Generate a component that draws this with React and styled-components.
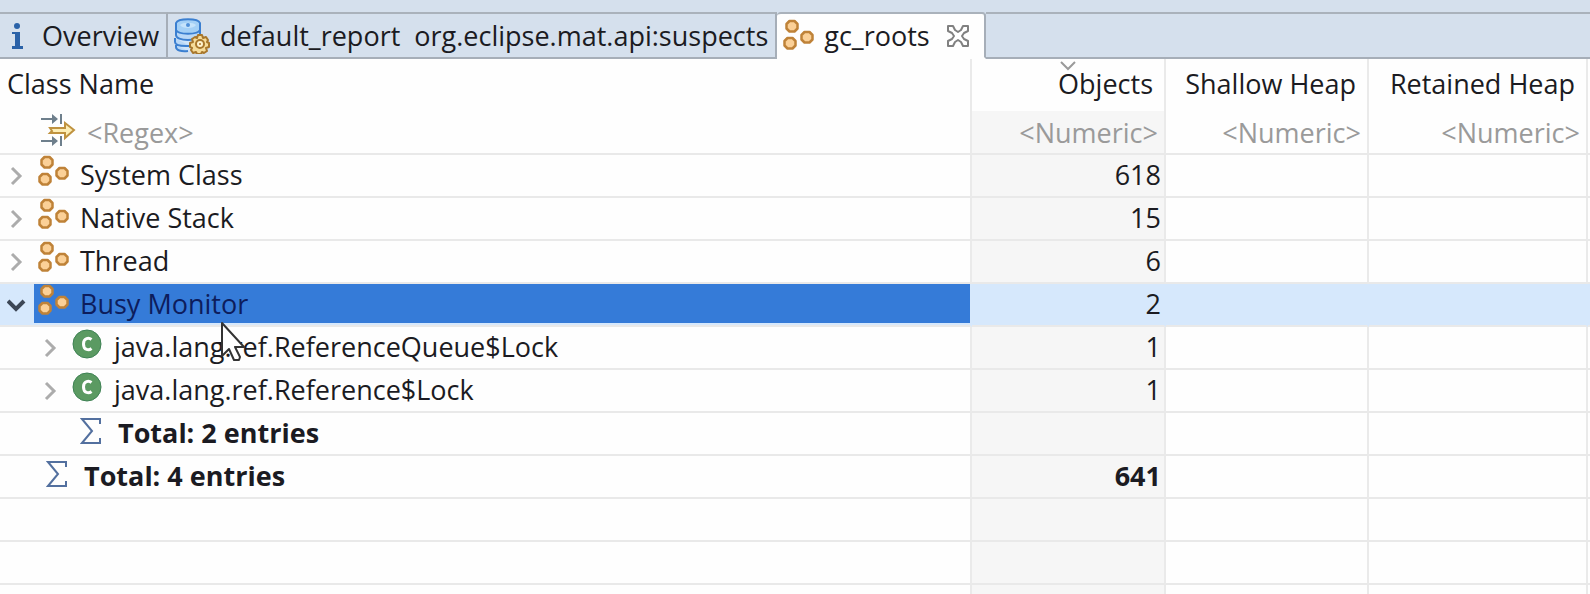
import React, { useState } from 'react'
import styled, { createGlobalStyle } from 'styled-components'

const GlobalStyle = createGlobalStyle`
  * {
    box-sizing: border-box;
  }
  body {
    margin: 0;
    overflow: hidden;
    background: #fefefe;
    color: #1b1b22;
    font-family: "Open Sans", "Noto Sans", "Noto Sans CJK SC", sans-serif;
    font-size: 27px;
  }
  button, input {
    font: inherit;
    color: inherit;
    background: none;
    border: 0;
    margin: 0;
    padding: 0;
  }
  svg {
    display: block;
    flex: none;
  }
`;

const View = styled.main`
  position: relative;
  height: 100vh;
  overflow: hidden;
`;

const TabStrip = styled.div`
  display: flex;
  height: 59px;
  padding-top: 12px;
  background: #d5e0ed;
`;

const Tab = styled.div`
  display: flex;
  align-items: center;
  padding: 0 ${props => (props.$active ? '14px' : '7px')} 0 6px;
  border-top: 2px solid #aab2bb;
  border-bottom: 2px solid ${props => (props.$active ? '#fefefe' : '#a6aeb8')};
  border-right: 2px solid #a6aeb8;
  border-radius: ${props => (props.$active ? '4px 4px 0 0' : '0')};
  background: ${props => (props.$active ? '#fefefe' : 'transparent')};
`;

const TabButton = styled.button`
  display: flex;
  align-items: center;
  gap: 10px;
  line-height: 36px;
  white-space: pre;
`;

const TabFill = styled.div`
  flex: 1;
  border-top: 2px solid #aab2bb;
  border-bottom: 2px solid #a6aeb8;
`;

const CloseButton = styled.button`
  margin-left: 16px;
`;

const Table = styled.table`
  width: 100%;
  table-layout: fixed;
  border-collapse: separate;
  border-spacing: 0;
`;

const Col = styled.col`
  width: ${props => props.$width};
`;

const HeadCell = styled.th`
  position: relative;
  height: 52px;
  padding: 0 ${props => (props.$numeric ? '11px' : '7px')} 2px;
  border-right: 2px solid #eaeaea;
  font-weight: normal;
  line-height: 36px;
  white-space: nowrap;
  text-align: ${props => (props.$numeric ? 'right' : 'left')};
`;

const SortMark = styled.svg`
  position: absolute;
  top: 2px;
  left: 50%;
  transform: translateX(-50%);
`;

const FilterCell = styled.td`
  height: 44px;
  padding: 0 6px 0 ${props => (props.$numeric ? '6px' : '40px')};
  border-right: 2px solid #eaeaea;
  border-bottom: 2px solid #e9e9e9;
  background: ${props => (props.$sorted ? '#f6f6f6' : 'transparent')};
`;

const FilterBox = styled.label`
  display: flex;
  align-items: center;
  gap: 10px;
`;

const FilterInput = styled.input`
  flex: 1;
  min-width: 0;
  height: 36px;
  text-align: ${props => (props.$numeric ? 'right' : 'left')};
  outline: none;
  &::placeholder {
    color: #9a9a9a;
    opacity: 1;
  }
`;

const Row = styled.tr`
  background: ${props => (props.$selected ? '#d6e8fc' : 'transparent')};
`;

const Cell = styled.td`
  height: 43px;
  padding: 0 3px 2px;
  border-right: 2px solid ${props => (props.$selected ? '#d6e8fc' : '#eaeaea')};
  border-bottom: 2px solid #e9e9e9;
  background: ${props => (props.$sorted && !props.$selected ? '#f6f6f6' : 'transparent')};
  font-weight: ${props => (props.$bold ? 'bold' : 'normal')};
  line-height: 39px;
  text-align: right;
`;

const NameCell = styled(Cell)`
  padding: 0 0 2px ${props => props.$level * 34}px;
  text-align: left;
`;

const EndCell = styled.td`
  padding: 0;
  border-bottom: 2px solid #e9e9e9;
`;

const NameLine = styled.div`
  display: flex;
  height: 39px;
`;

const Toggle = styled.button`
  display: flex;
  align-items: center;
  justify-content: center;
  width: 34px;
  padding-top: 3px;
`;

const Spacer = styled.span`
  width: 34px;
`;

const Label = styled.span`
  display: flex;
  flex: 1;
  gap: ${props => (props.$total ? '16px' : '11px')};
  padding-left: ${props => (props.$total ? '12px' : '4px')};
  background: ${props => (props.$selected ? '#357bd8' : 'transparent')};
  color: ${props => (props.$selected ? '#0d1d5c' : 'inherit')};
  white-space: nowrap;
`;

const Pointer = styled.svg`
  position: absolute;
  left: 220px;
  top: 320px;
  pointer-events: none;
`;

const InfoIcon = () => (
  <svg width="26" height="28" viewBox="-2 0 26 28">
    <circle cx="9" cy="4" r="3" fill="#2a62a8" />
    <path d="M4 10h8v14h3v3H4v-3h3V12H4z" fill="#2a62a8" />
  </svg>
)

const ReportIcon = () => (
  <svg width="36" height="36" viewBox="0 0 36 36">
    <path d="M2 6v23c0 3 4 4 10 4h10V6z" fill="#cfe4fa" />
    <path
      d="M1 20v4c0 3 5 4 11 4h4M2 27v2c0 3 5 5 12 4M2 12v5c0 3 5 5 12 5 7 0 12-2 12-5v-5"
      fill="#b9d8f7"
      stroke="#3b7fd0"
      strokeWidth="2"
    />
    <path d="M2 5c2-5 22-5 24 0v7c-2 5-22 5-24 0z" fill="#a4d0f6" stroke="#3b7fd0" strokeWidth="2" />
    <path d="M6 7c3-3 13-3 16 0-2 4-14 4-16 0z" fill="#c5e3fb" />
    <circle cx="14" cy="7" r="2" fill="#4f8fd8" />
    <path
      d="M24 17h4l1 3 3-1 2 3-1 2 2 1v4l-3 1 1 3-3 2-2-1-1 2h-4l-1-2-3 1-2-3 1-2-2-1v-4l3-1-1-3 3-2 2 1z"
      fill="#f6dc9a"
      stroke="#a8772c"
      strokeWidth="2"
      strokeLinejoin="round"
    />
    <circle cx="26" cy="26" r="4" fill="#fff3cf" stroke="#a8772c" strokeWidth="2" />
    <circle cx="26" cy="26" r="1" fill="#a8772c" />
  </svg>
)

const RootsIcon = () => (
  <svg width="31" height="34" viewBox="0 0 31 34">
    <g fill="#fbd097" stroke="#bf8238" strokeWidth="2.5" strokeLinejoin="round">
      <path d="M6.500 2h5l3 3v4.500l-3 3h-5l-3-3V5z" />
      <path d="M4.500 19h5l3 3v4.500l-3 3h-5l-3-3V22z" />
      <path d="M21.500 13h5l3 3v4.500l-3 3h-5l-3-3V16z" />
    </g>
  </svg>
)

const CloseIcon = () => (
  <svg width="24" height="24" viewBox="0 0 24 24">
    <path
      d="M2 2h5l2 4 3 2 3-2 2-4h5v5l-4 2-2 3 2 3 4 2v5h-5l-2-4-3-2-3 2-2 4H2v-5l4-2 2-3-2-3-4-2z"
      fill="#fff"
      stroke="#808080"
      strokeWidth="2"
      strokeLinejoin="round"
    />
  </svg>
)

const FilterIcon = () => (
  <svg width="37" height="40" viewBox="0 0 37 40">
    <g fill="#6e7f8c">
      <path d="M1 6h11V2l6 5-6 5V8H1z" />
      <path d="M20 2h2v10h-2z" />
      <path d="M1 28h11v-4l6 5-6 5v-4H1z" />
      <path d="M20 24h2v10h-2z" />
    </g>
    <path d="M10 16h15v-5l9 7-9 8v-5H10l2-2z" fill="#fdeeb5" stroke="#bf923f" strokeWidth="2" />
  </svg>
)

const ClassIcon = () => (
  <svg width="31" height="34" viewBox="0 0 31 34">
    <circle cx="15" cy="17" r="14" fill="#5b9a62" stroke="#3e8254" strokeWidth="1" />
    <path
      d="M19.500 12.500C17 10.500 11.500 10.500 11.500 17S17 23.500 19.500 21.500"
      fill="none"
      stroke="#fff"
      strokeWidth="3"
    />
  </svg>
)

const SumIcon = () => (
  <svg width="22" height="38" viewBox="0 0 22 38">
    <path
      d="M20 11V6H2l10 12L2 30h18v-5"
      fill="none"
      stroke="#53709f"
      strokeWidth="2"
    />
  </svg>
)

const Chevron = ({ open }) => (
  <svg width="20" height="20" viewBox="0 0 20 20">
    <path
      d={open ? 'M1 6l8 8 8-8' : 'M5 2l8 8-8 8'}
      fill="none"
      stroke={open ? '#3d4756' : '#acacac'}
      strokeWidth={open ? 4 : 3}
    />
  </svg>
)

const icons = { roots: RootsIcon, cls: ClassIcon, sum: SumIcon };

const rows = [
  { name: 'System Class', icon: 'roots', level: 0, objects: '618' },
  { name: 'Native Stack', icon: 'roots', level: 0, objects: '15' },
  { name: 'Thread', icon: 'roots', level: 0, objects: '6' },
  { name: 'Busy Monitor', icon: 'roots', level: 0, objects: '2', open: true },
  { name: 'java.lang.ref.ReferenceQueue$Lock', icon: 'cls', level: 1, objects: '1' },
  { name: 'java.lang.ref.Reference$Lock', icon: 'cls', level: 1, objects: '1' },
  { name: 'Total: 2 entries', icon: 'sum', level: 1 },
  { name: 'Total: 4 entries', icon: 'sum', level: 0, objects: '641' },
];
const emptyRows = [0, 1, 2];

function TreeRow({ row, selected, onSelect }) {
  const Icon = icons[row.icon];
  const total = row.icon === 'sum';
  return (
    <Row $selected={selected} onClick={onSelect}>
      <NameCell $level={row.level} $bold={total} $selected={selected}>
        <NameLine>
          {total ? <Spacer /> : (
            <Toggle aria-label={row.name} aria-expanded={!!row.open}>
              <Chevron open={row.open} />
            </Toggle>
          )}
          <Label $selected={selected} $total={total}>
            <Icon />
            {row.name}
          </Label>
        </NameLine>
      </NameCell>
      <Cell $sorted $bold={total} $selected={selected}>{row.objects}</Cell>
      <Cell $selected={selected} />
      <Cell $selected={selected} />
      <EndCell />
    </Row>
  )
}

export default function App() {
  const [selected, setSelected] = useState(3);

  return (
    <View>
      <GlobalStyle />
      <TabStrip role="tablist">
        <Tab>
          <TabButton role="tab"><InfoIcon />Overview</TabButton>
        </Tab>
        <Tab>
          <TabButton role="tab"><ReportIcon />default_report  org.eclipse.mat.api:suspects</TabButton>
        </Tab>
        <Tab $active>
          <TabButton role="tab" aria-selected="true"><RootsIcon />gc_roots</TabButton>
          <CloseButton aria-label="Close"><CloseIcon /></CloseButton>
        </Tab>
        <TabFill />
      </TabStrip>
      <Table>
        <colgroup>
          <Col />
          <Col $width="194px" />
          <Col $width="203px" />
          <Col $width="219px" />
          <Col $width="2px" />
        </colgroup>
        <thead>
          <tr>
            <HeadCell>Class Name</HeadCell>
            <HeadCell $numeric aria-sort="descending">
              <SortMark width="16" height="10" viewBox="0 0 16 10">
                <path d="M1 1l7 7 7-7" fill="none" stroke="#9a9a9a" strokeWidth="2" />
              </SortMark>
              Objects
            </HeadCell>
            <HeadCell $numeric>Shallow Heap</HeadCell>
            <HeadCell $numeric>Retained Heap</HeadCell>
          </tr>
          <tr>
            <FilterCell>
              <FilterBox>
                <FilterIcon />
                <FilterInput aria-label="Class Name filter" placeholder="<Regex>" />
              </FilterBox>
            </FilterCell>
            {['Objects', 'Shallow Heap', 'Retained Heap'].map((name, i) => (
              <FilterCell key={name} $numeric $sorted={i === 0}>
                <FilterBox>
                  <FilterInput $numeric aria-label={`${name} filter`} placeholder="<Numeric>" />
                </FilterBox>
              </FilterCell>
            ))}
            <EndCell />
          </tr>
        </thead>
        <tbody>
          {rows.map((row, i) => (
            <TreeRow key={row.name} row={row} selected={i === selected} onSelect={() => setSelected(i)} />
          ))}
          {emptyRows.map(n => (
            <Row key={n}>
              <Cell />
              <Cell $sorted />
              <Cell />
              <Cell />
              <EndCell />
            </Row>
          ))}
        </tbody>
      </Table>
      <Pointer width="28" height="44" viewBox="0 0 28 44">
        <path
          d="M2 3v33l7-7 5 11h5l1-3-5-10h9z"
          fill="#fff"
          stroke="#333"
          strokeWidth="2"
          strokeLinejoin="round"
        />
      </Pointer>
    </View>
  )
}
